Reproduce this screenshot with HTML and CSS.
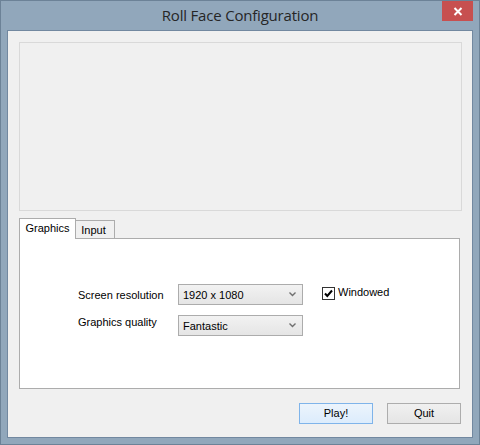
FILE: index.html
```html
<!DOCTYPE html>
<html>
<head>
<meta charset="utf-8">
<title>Roll Face Configuration</title>
<link rel="stylesheet" href="styles.css">
</head>
<body>
<div class="window">
  <div class="titlebar">
    <div></div>
    <div class="title">Roll Face Configuration</div>
    <div class="close">
      <svg width="10" height="9" viewBox="0 0 10 9"><path d="M1.5 1 L8.5 8 M8.5 1 L1.5 8" stroke="#fff" stroke-width="2" fill="none"/></svg>
    </div>
  </div>
  <div class="client">
    <div class="picture"></div>
    <div class="tabs">
      <div class="tab active">Graphics</div>
      <div class="tab">Input</div>
    </div>
    <div class="panel">
      <div class="form">
        <div class="label">Screen resolution</div>
        <div class="combo"><span>1920 x 1080</span>
          <svg class="arrow" width="7" height="5" viewBox="0 0 7 5"><path d="M0.5 0.5 L3.5 3.5 L6.5 0.5" stroke="#707070" stroke-width="1.4" fill="none"/></svg>
        </div>
        <div class="check">
          <span class="box"><svg width="11" height="11" viewBox="0 0 11 11"><path d="M2 5.5 L4.3 8 L9 2.5" stroke="#000" stroke-width="2" fill="none"/></svg></span>
          <span class="check-label">Windowed</span>
        </div>
        <div class="label label-up">Graphics quality</div>
        <div class="combo"><span>Fantastic</span>
          <svg class="arrow" width="7" height="5" viewBox="0 0 7 5"><path d="M0.5 0.5 L3.5 3.5 L6.5 0.5" stroke="#707070" stroke-width="1.4" fill="none"/></svg>
        </div>
      </div>
    </div>
    <div class="buttons">
      <div class="btn default">Play!</div>
      <div class="btn">Quit</div>
    </div>
  </div>
</div>
</body>
</html>
```
FILE: styles.css
```css
html, body {
  margin: 0;
  padding: 0;
}
body {
  width: 480px;
  height: 445px;
  font-family: "Liberation Sans", Arial, sans-serif;
  font-size: 11px;
  color: #000;
}
.window {
  box-sizing: border-box;
  width: 480px;
  height: 445px;
  border: 1px solid #6c8297;
  background: #91a7bb;
  padding: 0 6px 6px 6px;
  display: flex;
  flex-direction: column;
}
.titlebar {
  height: 29px;
  display: grid;
  grid-template-columns: 1fr auto 1fr;
  margin: 0 -6px;
}
.title {
  font-family: "Open Sans", "Noto Sans", sans-serif;
  font-size: 15px;
  letter-spacing: -0.2px;
  line-height: 28px;
  color: #262626;
  white-space: nowrap;
}
.close {
  justify-self: end;
  margin-right: 6px;
  width: 31px;
  height: 20px;
  background: #c75050;
  display: flex;
  align-items: center;
  justify-content: center;
}
.client {
  flex: 1;
  border: 1px solid #7288a0;
  background: #f0f0f0;
  padding: 11px 11px 0 11px;
  display: flex;
  flex-direction: column;
}
.picture {
  box-sizing: border-box;
  width: 443px;
  height: 169px;
  border: 1px solid #d9d9d9;
}
.tabs {
  display: flex;
  align-items: flex-end;
  margin-top: 7px;
  margin-bottom: -1px;
  height: 21px;
  position: relative;
  z-index: 1;
}
.tab {
  box-sizing: border-box;
  height: 19px;
  width: 40px;
  margin-left: -1px;
  border: 1px solid #acacac;
  background: #f0f0f0;
  padding: 3px 3px 0 0;
  line-height: 13px;
  text-align: center;
}
.tab.active {
  height: 21px;
  width: 57px;
  margin-left: 0;
  padding-right: 0;
  border-bottom: none;
  background: #fff;
  position: relative;
  z-index: 1;
}
.panel {
  box-sizing: border-box;
  width: 441px;
  height: 151px;
  border: 1px solid #acacac;
  background: #fff;
  padding: 45px 0 0 58px;
}
.form {
  display: grid;
  grid-template-columns: 100px 125px auto;
  grid-template-rows: 21px 21px;
  row-gap: 10px;
}
.label {
  line-height: 21px;
  padding-top: 1px;
  white-space: nowrap;
}
.label-up {
  line-height: 13px;
  padding-top: 1px;
}
.combo {
  box-sizing: border-box;
  height: 21px;
  border: 1px solid #acacac;
  background: linear-gradient(#f2f2f2, #e5e5e5);
  display: flex;
  align-items: center;
  justify-content: space-between;
  padding: 1px 6px 0 4px;
}
.combo .arrow {
  margin-top: -1px;
}
.check {
  display: flex;
  align-items: flex-start;
  padding-left: 19px;
  padding-top: 3px;
}
.box {
  box-sizing: border-box;
  width: 13px;
  height: 13px;
  border: 1px solid #333;
  background: #fff;
  display: flex;
}
.check-label {
  margin-left: 3px;
  line-height: 13px;
  margin-top: -1px;
}
.buttons {
  display: flex;
  justify-content: flex-end;
  gap: 14px;
  margin-top: 14px;
}
.btn {
  box-sizing: border-box;
  width: 74px;
  height: 21px;
  border: 1px solid #adadad;
  background: linear-gradient(#f0f0f0, #e5e5e5);
  text-align: center;
  line-height: 19px;
}
.btn.default {
  border-color: #7fb4ea;
  background: linear-gradient(#ecf4fc, #dcecfc);
}
```
